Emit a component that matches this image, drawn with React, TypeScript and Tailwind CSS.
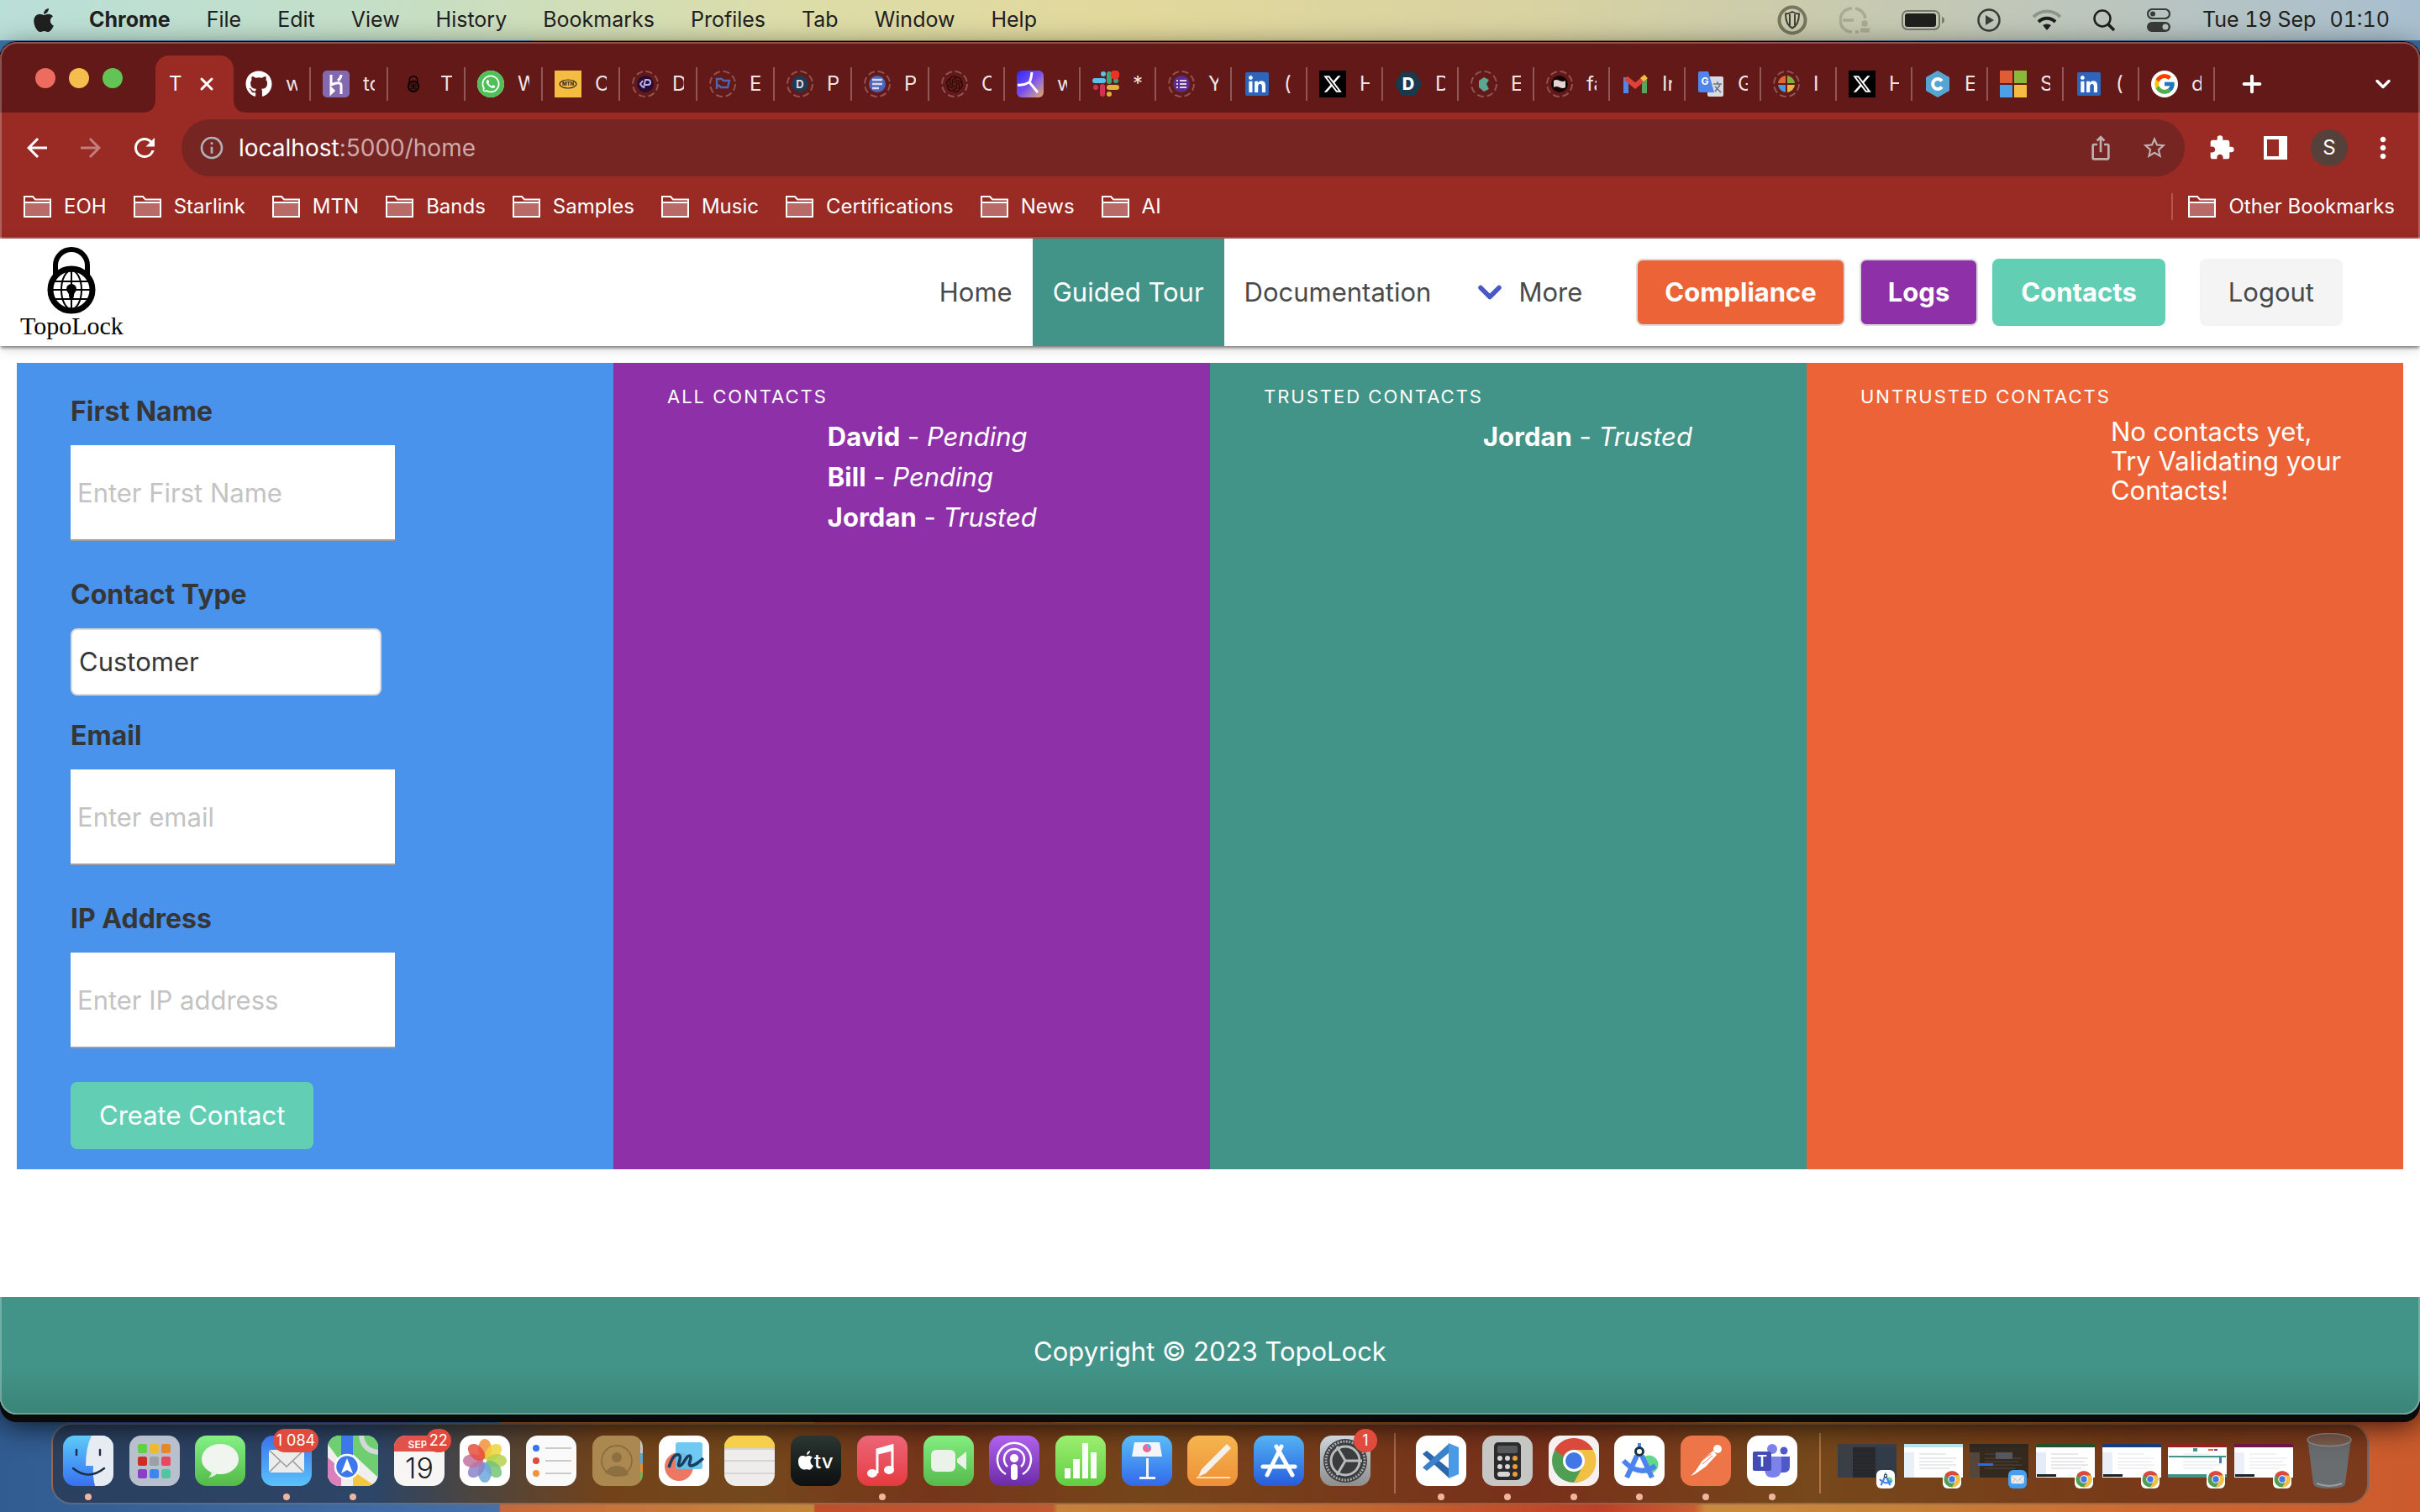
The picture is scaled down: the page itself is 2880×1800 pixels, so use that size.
import type { ReactNode } from 'react';
import { FaApple, FaGithub, FaLinkedin, FaWhatsapp } from 'react-icons/fa';
import { FaXTwitter } from 'react-icons/fa6';
import { FcGoogle } from 'react-icons/fc';
import {
  MdArrowBack,
  MdArrowForward,
  MdExtension,
  MdInfoOutline,
  MdIosShare,
  MdMoreVert,
  MdRefresh,
  MdStarBorder,
} from 'react-icons/md';
import { SiOpenai } from 'react-icons/si';
import { ChevronDown, Plus, X } from 'lucide-react';

interface Tab {
  title: string;
  icon: ReactNode;
  narrow?: boolean;
}

interface Contact {
  name: string;
  status: 'Pending' | 'Trusted';
}

const menus = ['File', 'Edit', 'View', 'History', 'Bookmarks', 'Profiles', 'Tab', 'Window', 'Help'];
const bookmarks = ['EOH', 'Starlink', 'MTN', 'Bands', 'Samples', 'Music', 'Certifications', 'News', 'AI'];

const contacts: Contact[] = [
  { name: 'David', status: 'Pending' },
  { name: 'Bill', status: 'Pending' },
  { name: 'Jordan', status: 'Trusted' },
];

// Discarded tabs get a dashed ring round a smaller favicon.
function Ring({ children }: { children?: ReactNode }) {
  return (
    <svg viewBox="0 0 32 32" className="size-8">
      <circle cx="16" cy="16" r="15" fill="none" stroke="#8f5553" strokeWidth="2" strokeDasharray="8 3.8" />
      {children}
    </svg>
  );
}

function LockMark({ className }: { className: string }) {
  return (
    <svg viewBox="0 0 58 80" className={className} fill="none" stroke="currentColor">
      <path d="M10 36V22a19 19 0 0 1 38 0v14" strokeWidth="6" />
      <circle cx="29" cy="51" r="25" strokeWidth="7" />
      <path d="M7 41h44M5 51h48M7 62h44M29 28v46" strokeWidth="2" />
      <ellipse cx="29" cy="51" rx="12" ry="23" strokeWidth="2" />
      <circle cx="29" cy="50" r="6" fill="currentColor" stroke="none" />
      <path d="M25 52h8l-2 11h-4z" fill="currentColor" stroke="none" />
    </svg>
  );
}

function XBox() {
  return (
    <span className="flex size-8 items-center justify-center bg-black">
      <FaXTwitter className="size-6 text-white" />
    </span>
  );
}

function LinkedInIcon() {
  return (
    <span className="flex size-8 items-center justify-center">
      <svg viewBox="0 0 32 32" className="absolute size-7">
        <rect x="3" y="3" width="26" height="26" fill="#fff" />
      </svg>
      <FaLinkedin className="relative size-8 text-[#2d64bc]" />
    </span>
  );
}

const tabs: Tab[] = [
  { title: 'w', icon: <FaGithub className="size-8 text-white" /> },
  {
    title: 'to',
    icon: (
      <svg viewBox="0 0 32 32" className="size-8" fill="none" stroke="#fff" strokeWidth="3">
        <rect width="32" height="32" rx="5" fill="#8369b0" stroke="none" />
        <path d="M10 5v12q12-5 12 1v10M22 5q0 4-4 7M10 21v6l3-3z" />
      </svg>
    ),
  },
  { title: 'T', icon: <LockMark className="mx-2 h-5 w-4 text-black" /> },
  {
    title: 'W',
    icon: (
      <span className="flex size-8 items-center justify-center rounded-full bg-white">
        <FaWhatsapp className="size-8 rounded-full bg-[#4fbf57] p-1 text-white" />
      </span>
    ),
  },
  {
    title: 'C',
    icon: (
      <svg viewBox="0 0 32 32" className="size-8">
        <rect width="32" height="32" fill="#f4bd41" />
        <ellipse cx="16" cy="16" rx="10" ry="5" fill="none" stroke="#222" strokeWidth="1.2" />
        <text x="16" y="18" fontSize="6" fontWeight="700" textAnchor="middle" fill="#222">MTN</text>
      </svg>
    ),
  },
  {
    title: 'D',
    icon: (
      <Ring>
        <circle cx="16" cy="16" r="10" fill="#2b0a33" />
        <path d="m13 12-3 4 3 4M14 21l2-10h3a3 3 0 0 1 0 6h-3" fill="none" stroke="#b7b3ee" strokeWidth="2" />
      </Ring>
    ),
  },
  {
    title: 'E',
    icon: (
      <Ring>
        <path d="M9 22V10h6l2 2h7l-2 8h-8l-2-2h-2" fill="none" stroke="#4d67b4" strokeWidth="2.4" />
      </Ring>
    ),
  },
  {
    title: 'P',
    icon: (
      <Ring>
        <circle cx="16" cy="16" r="10" fill="#1e3a54" />
        <text x="16" y="21" fontSize="13" fontWeight="700" textAnchor="middle" fill="#e8dede">D</text>
      </Ring>
    ),
  },
  {
    title: 'P',
    icon: (
      <Ring>
        <circle cx="16" cy="16" r="10" fill="#4a66c0" />
        <path d="M10 11h12M10 16h12M10 21h8" stroke="#e3d7e0" strokeWidth="2.4" />
      </Ring>
    ),
  },
  {
    title: 'C',
    narrow: true,
    icon: (
      <span className="relative flex size-8 items-center justify-center">
        <span className="absolute inset-0">
          <Ring />
        </span>
        <SiOpenai className="size-5 text-[#2a0806]" />
      </span>
    ),
  },
  {
    title: 'w',
    narrow: true,
    icon: (
      <span className="flex size-8 items-center justify-center rounded-md bg-linear-to-br from-[#2b20f5] via-[#7d4df0] to-[#f0a04b]">
        <svg viewBox="0 0 32 32" className="size-8" fill="none" stroke="#fff" strokeWidth="3">
          <path d="M18 2q-1 9-3 12l10 12M15 14Q8 18 1 17" />
        </svg>
      </span>
    ),
  },
  {
    title: '*',
    narrow: true,
    icon: (
      <svg viewBox="0 0 32 32" className="size-8" strokeWidth="6" strokeLinecap="round">
        <path d="M13 4v0M3 12h10" stroke="#5cc0e8" />
        <path d="M20 4v9M28 12v0" stroke="#3fa37a" />
        <path d="M12 19v9M4 20v0" stroke="#cf3553" />
        <path d="M20 20h9M20 28v0" stroke="#e3b042" />
        <circle cx="27" cy="5" r="5.500" fill="#ea3323" />
      </svg>
    ),
  },
  {
    title: 'Y',
    narrow: true,
    icon: (
      <Ring>
        <circle cx="16" cy="16" r="10" fill="#5b2d92" />
        <path d="M10 12h2M14 12h8M10 16h2M14 16h8M10 20h2M14 20h8" stroke="#e3d7e0" strokeWidth="2" />
      </Ring>
    ),
  },
  { title: '(', narrow: true, icon: <LinkedInIcon /> },
  { title: 'H', narrow: true, icon: <XBox /> },
  {
    title: 'D',
    narrow: true,
    icon: (
      <svg viewBox="0 0 32 32" className="size-8">
        <path d="M8 2h16l8 14-8 14H8L0 16z" fill="#173a4c" />
        <text x="16" y="23" fontSize="20" fontWeight="800" textAnchor="middle" fill="#fff">D</text>
      </svg>
    ),
  },
  {
    title: 'E',
    narrow: true,
    icon: (
      <Ring>
        <path d="m16 8 6 3-3 5 3 6-6 3-6-5v-8z" fill="#5aa88f" />
      </Ring>
    ),
  },
  {
    title: 'fa',
    narrow: true,
    icon: (
      <Ring>
        <circle cx="16" cy="16" r="10" fill="#170504" />
        <path d="M9 12q3-2 7 0t7 0v8q-3 2-7 0t-7 0z" fill="#e4d4d4" />
      </Ring>
    ),
  },
  {
    title: 'In',
    narrow: true,
    icon: (
      <svg viewBox="0 0 32 32" className="size-8" strokeWidth="6" fill="none">
        <path d="M5 27V8" stroke="#4f86ec" />
        <path d="M27 27V8" stroke="#57a55c" />
        <path d="m5 9 11 9 11-9" stroke="#db4437" />
        <path d="m24 11 5-4" stroke="#f4bf42" />
      </svg>
    ),
  },
  {
    title: 'G',
    narrow: true,
    icon: (
      <svg viewBox="0 0 32 32" className="size-8">
        <rect x="12" y="7" width="19" height="24" rx="2" fill="#d8dbe2" />
        <path d="M19 16h10M24 13v3M21 25l6-8M21 19l7 7" stroke="#6b7480" strokeWidth="1.6" />
        <path d="M3 1h10l7 25H3a2 2 0 0 1-2-2V3a2 2 0 0 1 2-2z" fill="#5086ec" />
        <text x="9" y="17" fontSize="12" fontWeight="700" textAnchor="middle" fill="#fff">G</text>
      </svg>
    ),
  },
  {
    title: 'I',
    narrow: true,
    icon: (
      <Ring>
        <path d="M15 15V6A10 10 0 0 0 6 15z" fill="#dd6a35" />
        <path d="M17 15V6a10 10 0 0 1 9 9z" fill="#7fae3c" />
        <path d="M15 17v9a10 10 0 0 1-9-9z" fill="#4d95dc" />
        <path d="M17 17v9a10 10 0 0 0 9-9z" fill="#e7b543" />
      </Ring>
    ),
  },
  { title: 'H', narrow: true, icon: <XBox /> },
  {
    title: 'E',
    narrow: true,
    icon: (
      <svg viewBox="0 0 32 32" className="size-8">
        <path d="m16 0 14 8v16l-14 8-14-8V8z" fill="#55a4d4" />
        <path d="M21 12.500a6 6 0 1 0 0 7" fill="none" stroke="#fff" strokeWidth="4" />
      </svg>
    ),
  },
  {
    title: 'S',
    narrow: true,
    icon: (
      <span className="grid size-8 grid-cols-2 gap-0.5">
        <span className="bg-[#e05c34]" />
        <span className="bg-[#8cb83a]" />
        <span className="bg-[#4ba0e8]" />
        <span className="bg-[#f4bd41]" />
      </span>
    ),
  },
  { title: '(', narrow: true, icon: <LinkedInIcon /> },
  {
    title: 'd',
    narrow: true,
    icon: (
      <span className="flex size-8 items-center justify-center rounded-full bg-white">
        <FcGoogle className="size-7" />
      </span>
    ),
  },
];

function MenuBar() {
  return (
    <header className="flex h-12 items-center bg-[linear-gradient(90deg,#badfd8_0%,#c3dfc9_14%,#dddda8_33%,#e2d89c_47%,#d8d2a2_64%,#cacbae_75%,#bac5bf_88%,#a8bfd0_100%)] pr-9 pl-9 text-[25px] text-[#1f2120]">
      <FaApple className="mr-[38px] size-8" />
      <nav className="flex gap-[43px]">
        <span className="font-bold">Chrome</span>
        {menus.map((m) => (
          <span key={m}>{m}</span>
        ))}
      </nav>
      <div className="ml-auto flex items-center gap-[38px]">
        <svg viewBox="0 0 36 36" className="size-9" fill="none">
          <circle cx="18" cy="18" r="15.500" stroke="#77775f" strokeWidth="4" />
          <path d="M18 8c3 2 5 2.500 8 2.500 0 9-2 14-8 17-6-3-8-8-8-17 3 0 5-.5 8-2.500zM15 11v13M21 11v13" stroke="#3f4037" strokeWidth="2" />
        </svg>
        <svg viewBox="0 0 36 36" className="size-9" fill="none" stroke="#aaab92" strokeWidth="3.500">
          <path d="M15 4a14 14 0 0 0 0 28M19 4a14 14 0 0 1 12 12M19 32h4M4 18h13" />
          <circle cx="30" cy="22" r="2" fill="#aaab92" />
          <path d="M25 30h11" strokeWidth="5" />
        </svg>
        <svg viewBox="0 0 52 26" className="h-[26px] w-[52px]">
          <rect x="1" y="2" width="44" height="22" rx="6" fill="none" stroke="#75786a" strokeWidth="2" />
          <rect x="4" y="5" width="37" height="16" rx="3" fill="#1f201e" />
          <path d="M48 9c4 1 4 7 0 8z" fill="#75786a" />
        </svg>
        <svg viewBox="0 0 28 28" className="size-7">
          <circle cx="14" cy="14" r="12.500" fill="none" stroke="#3a3c38" strokeWidth="2.500" />
          <path d="m10 8 10 6-10 6z" fill="#3a3c38" />
        </svg>
        <svg viewBox="0 0 34 26" className="h-[26px] w-[34px]" fill="none" strokeWidth="4">
          <path d="M1 9a23 23 0 0 1 32 0" stroke="#8f958c" />
          <path d="M7 15a14 14 0 0 1 20 0" stroke="#1f201e" />
          <path d="M17 25l-5-6q5-3 10 0z" fill="#1f201e" />
        </svg>
        <svg viewBox="0 0 26 26" className="size-[26px]" fill="none" stroke="#1f201e">
          <circle cx="11" cy="11" r="9.500" strokeWidth="2.500" />
          <path d="m18 18 7 7" strokeWidth="3.500" />
        </svg>
        <svg viewBox="0 0 28 28" className="size-7">
          <rect x="1" y="1" width="26" height="11" rx="5.500" fill="none" stroke="#3a3c3a" strokeWidth="2.200" />
          <circle cx="7" cy="6.500" r="3" fill="#3a3c3a" />
          <rect y="16" width="28" height="12" rx="6" fill="#3a3c3a" />
          <circle cx="22" cy="22" r="3.500" fill="#bcc6c2" />
        </svg>
        <time className="flex gap-4 whitespace-nowrap tabular-nums">
          <span>Tue 19 Sep</span>
          <span>01:10</span>
        </time>
      </div>
    </header>
  );
}

function TabStrip() {
  return (
    <div className="flex h-[84px] items-end bg-[#621917]">
      <div className="flex h-[82px] w-[185px] items-center gap-4 pl-[42px]">
        <span className="size-6 rounded-full bg-[#ed6b5f]" />
        <span className="size-6 rounded-full bg-[#f4be4f]" />
        <span className="size-6 rounded-full bg-[#61c454]" />
      </div>
      <div className="relative flex h-[68px] w-[93px] items-center justify-between rounded-t-2xl bg-[#992a24] pr-5 pl-4 text-white">
        <svg viewBox="0 0 16 16" className="absolute bottom-0 -left-4 size-4">
          <path d="M0 16h16V0q0 16-16 16" fill="#992a24" />
        </svg>
        <svg viewBox="0 0 16 16" className="absolute -right-4 bottom-0 size-4">
          <path d="M16 16H0V0q0 16 16 16" fill="#992a24" />
        </svg>
        <span className="text-2xl">T</span>
        <button type="button" aria-label="Close tab">
          <X className="size-6" strokeWidth={3} />
        </button>
      </div>
      {tabs.map((tab, i) => (
        <div
          key={i}
          className={
            tab.narrow
              ? 'flex h-[68px] w-[90px] shrink-0 items-center'
              : 'flex h-[68px] w-[92px] shrink-0 items-center'
          }
        >
          <span className="relative ml-[14px] flex w-8 shrink-0">{tab.icon}</span>
          <span className="ml-4 flex-1 overflow-hidden text-2xl whitespace-nowrap text-[#f0e4e4]">{tab.title}</span>
          <span className="ml-[14px] h-10 w-0.5 bg-[#8f5856]" />
        </div>
      ))}
      <div className="flex h-[68px] flex-1 items-center justify-between pr-[30px] pl-7 text-white">
        <button type="button" aria-label="New tab">
          <Plus className="size-8" strokeWidth={3} />
        </button>
        <button type="button" aria-label="Search tabs">
          <ChevronDown className="size-7" strokeWidth={3} />
        </button>
      </div>
    </div>
  );
}

function Toolbar() {
  return (
    <div className="flex h-[84px] items-center pl-[26px]">
      <button type="button" aria-label="Back">
        <MdArrowBack className="size-9 text-white" />
      </button>
      <button type="button" aria-label="Forward" className="ml-7">
        <MdArrowForward className="size-9 text-[#c27f7c]" />
      </button>
      <button type="button" aria-label="Reload" className="ml-7">
        <MdRefresh className="size-9 text-white" />
      </button>
      <div className="ml-[26px] flex h-[68px] flex-1 items-center rounded-full bg-[#762523] pr-5 pl-5">
        <MdInfoOutline className="size-8 text-[#aeb2b8]" />
        <p className="ml-4 text-[28px] text-[#cfa9a8]">
          <span className="text-white">localhost</span>:5000/home
        </p>
        <MdIosShare className="ml-auto size-8 text-[#bfb0b0]" />
        <MdStarBorder className="ml-8 size-8 text-[#bfb0b0]" />
      </div>
      <MdExtension className="ml-7 size-8 text-white" />
      <svg viewBox="0 0 28 28" className="ml-[34px] size-7">
        <path d="M0 0h28v28H0zM4 4v20h14V4z" fill="#fff" fillRule="evenodd" />
      </svg>
      <span className="ml-7 flex size-11 items-center justify-center rounded-full bg-[#56403a] text-2xl text-white">S</span>
      <button type="button" aria-label="Menu" className="mr-6 ml-[22px]">
        <MdMoreVert className="size-10 text-white" />
      </button>
    </div>
  );
}

function Folder() {
  return (
    <svg viewBox="0 0 34 28" className="h-7 w-[34px]" stroke="#fff" strokeWidth="2">
      <path d="M1 26V2h10l3 3.500h18V26z" fill="#992a24" />
      <path d="M1 9h31v17H1z" fill="#b96a66" />
    </svg>
  );
}

function BookmarksBar() {
  return (
    <div className="flex h-[66px] items-start gap-8 border-b-2 border-[#b4554f] pt-3 pr-[30px] pl-7 text-2xl text-white">
      {bookmarks.map((b) => (
        <a key={b} href="#" className="flex items-center gap-[14px]">
          <Folder />
          {b}
        </a>
      ))}
      <a href="#" className="ml-auto flex items-center gap-[14px] border-l-2 border-[#b4554f] pl-[18px]">
        <Folder />
        Other Bookmarks
      </a>
    </div>
  );
}

function SiteNav() {
  return (
    <nav className="relative flex h-32 items-center bg-white pr-[92px] pl-6 text-[31px] text-[#4a4a4a] shadow-[0_2px_4px_rgba(0,0,0,0.5),0_4px_16px_rgba(0,0,0,0.12)]">
      <a href="#" className="flex flex-col items-center text-black">
        <LockMark className="h-20 w-[58px]" />
        <span className="font-['Liberation_Serif',serif] text-[30px] leading-7">TopoLock</span>
      </a>
      <div className="ml-auto flex items-center self-stretch">
        <a href="#" className="px-6">Home</a>
        <a href="#" className="flex items-center self-stretch bg-[#429488] px-6 text-white">Guided Tour</a>
        <a href="#" className="px-6">Documentation</a>
        <button type="button" className="flex items-center gap-3 px-6">
          <ChevronDown className="size-11 text-[#4859c6]" strokeWidth={3} />
          More
        </button>
      </div>
      <div className="ml-10 flex items-center gap-[17px]">
        <button type="button" className="h-20 rounded-lg border-2 border-[#dbdbdb] bg-[#ec6337] px-8 font-bold text-white">
          Compliance
        </button>
        <button type="button" className="h-20 rounded-lg border-2 border-[#dbdbdb] bg-[#8e30a7] px-8 font-bold text-white">
          Logs
        </button>
        <button type="button" className="h-20 rounded-lg bg-[#62cfb5] px-[34px] font-bold text-white">Contacts</button>
        <button type="button" className="ml-6 h-20 rounded-lg bg-[#f4f4f4] px-[34px]">Logout</button>
      </div>
    </nav>
  );
}

interface FieldProps {
  id: string;
  label: string;
  placeholder: string;
}

function Field({ id, label, placeholder }: FieldProps) {
  return (
    <div className="mb-10">
      <label htmlFor={id} className="mb-4 block text-[32px] leading-[48px] font-bold text-[#363636]">
        {label}
      </label>
      <input
        id={id}
        placeholder={placeholder}
        className="block h-[114px] w-[386px] border-b-2 border-[#9e9e9e] bg-white px-2 placeholder:text-[#c3c3c3]"
      />
    </div>
  );
}

function ContactForm() {
  return (
    <form className="bg-[#4993ed] px-16 pt-[34px] pb-6 text-[31px] leading-[48px]">
      <Field id="first-name" label="First Name" placeholder="Enter First Name" />
      <div className="mb-6">
        <label htmlFor="contact-type" className="mb-4 block text-[32px] leading-[48px] font-bold text-[#363636]">
          Contact Type
        </label>
        <select
          id="contact-type"
          className="block h-20 w-[370px] appearance-none rounded-lg border-2 border-[#dbdbdb] bg-white px-2 text-[#363636]"
        >
          <option>Customer</option>
          <option>Supplier</option>
        </select>
      </div>
      <Field id="email" label="Email" placeholder="Enter email" />
      <Field id="ip-address" label="IP Address" placeholder="Enter IP address" />
      <button type="button" className="h-20 rounded-lg bg-[#62cfb5] px-[34px] text-white">
        Create Contact
      </button>
    </form>
  );
}

interface ContactColumnProps {
  title: string;
  className: string;
  children: ReactNode;
}

// The list starts where the heading ends, one row below it.
function ContactColumn({ title, className, children }: ContactColumnProps) {
  return (
    <section className={className}>
      <h2 className="col-start-1 mb-3 text-[22px] leading-6 tracking-[2px] uppercase">{title}</h2>
      <div className="col-start-2 row-start-2 text-[31px] leading-[48px]">{children}</div>
    </section>
  );
}

function ContactList({ items }: { items: Contact[] }) {
  return (
    <ul>
      {items.map((c) => (
        <li key={c.name}>
          <strong>{c.name}</strong> - <em>{c.status}</em>
        </li>
      ))}
    </ul>
  );
}

function Footer() {
  return (
    <footer className="mt-auto h-[140px] bg-linear-to-b from-[#429488] from-60% to-[#3b8377] pt-[41px] text-center text-[31px] leading-[48px] text-white">
      Copyright © 2023 TopoLock
    </footer>
  );
}

interface DockIconProps {
  bg: string;
  children?: ReactNode;
  running?: boolean;
  badge?: string;
}

function DockIcon({ bg, children, running, badge }: DockIconProps) {
  return (
    <div className="relative flex flex-col items-center pt-[13px]">
      <svg viewBox="0 0 60 60" className={`size-[60px] rounded-[14px] ${bg}`}>
        {children}
      </svg>
      {running && <span className="mt-[9px] size-2 rounded-full bg-[#f0b59c]" />}
      {badge && (
        <span className="absolute top-[5px] -right-2 flex h-7 min-w-7 items-center justify-center rounded-full bg-[#e04b3e] px-1 text-lg whitespace-nowrap text-white">
          {badge}
        </span>
      )}
    </div>
  );
}

function ChromeGlyph() {
  return (
    <g>
      <circle cx="30" cy="30" r="26" fill="#4f9e53" />
      <path d="M30 56a26 26 0 0 0 23-39H30l11 19z" fill="#f3c046" />
      <path d="M7 17a26 26 0 0 1 46 0H30a13 13 0 0 0-12 8z" fill="#d9493c" />
      <circle cx="30" cy="30" r="13" fill="#fff" />
      <circle cx="30" cy="30" r="10" fill="#4177e6" />
    </g>
  );
}

function StudioGlyph() {
  return (
    <g>
      <path d="M36 25a11 11 0 1 1 0 19z" fill="#62d98a" />
      <path d="M27 24 15 50M33 24l12 26M11 30q19 20 38 6" fill="none" stroke="#4c83ee" strokeWidth="6" />
      <path d="M30 9v8" stroke="#4c83ee" strokeWidth="4" />
      <circle cx="30" cy="19" r="4.500" fill="#fff" stroke="#14323f" strokeWidth="3" />
    </g>
  );
}

function MailGlyph() {
  return (
    <g>
      <rect x="9" y="17" width="42" height="27" rx="3" fill="#ececec" />
      <path d="m10 18 20 19 20-19M10 43l13-13M50 43 37 30" fill="none" stroke="#999" strokeWidth="1.500" />
    </g>
  );
}

const launchpadColors = ['#62cf46', '#efb834', '#e4882c', '#cf2c26', '#9aa0a4', '#e9475f', '#8b3fc6', '#3c86ef', '#55c3a0'];
const petals = ['#f0923c', '#efd43a', '#b5d14a', '#76c375', '#6ea8dc', '#8b84c9', '#c1739f', '#e5503d'];

function DockApps() {
  return (
    <div className="flex w-[1556px] justify-between">
      <DockIcon bg="bg-linear-to-b from-[#5fcaf8] to-[#3a6ff0]" running>
        <path d="M34 0h26v60H38q-3-12-2-24h-9Q27 14 34 0z" fill="#e7ebf2" />
        <path d="M16 17v6M44 17v6M12 39q18 15 37 0" fill="none" stroke="#1d2f47" strokeWidth="2.500" strokeLinecap="round" />
      </DockIcon>
      <DockIcon bg="bg-[#b7c0cc]">
        {launchpadColors.map((c, i) => (
          <rect key={c} x={10 + (i % 3) * 14} y={10 + Math.floor(i / 3) * 15} width="11" height="11" rx="2.500" fill={c} />
        ))}
      </DockIcon>
      <DockIcon bg="bg-linear-to-b from-[#85f184] to-[#53ba47]">
        <ellipse cx="30" cy="28" rx="22" ry="18" fill="#f0f6ef" />
        <path d="M20 42q0 5-4 8 8-1 11-6z" fill="#e3f3df" />
      </DockIcon>
      <DockIcon bg="bg-linear-to-b from-[#3c72ea] to-[#5cc2fa]" running badge="1 084">
        <MailGlyph />
      </DockIcon>
      <DockIcon bg="bg-[#f0efee]" running>
        <path d="M0 0h16v32L0 10zM30 0h30v50L30 22z" fill="#6fce70" />
        <path d="M0 26 16 40v20H0z" fill="#dc80bb" />
        <path d="M30 42l26 18H30z" fill="#f2c840" />
        <path d="M16 0h14v40H16z" fill="#3c78ec" />
        <path d="M40 0q2 18 20 20" fill="none" stroke="#d5d8d8" strokeWidth="6" />
        <circle cx="23" cy="37" r="14" fill="#3c78ec" stroke="#fff" strokeWidth="2.500" />
        <path d="m23 27 7 18-7-4-7 4z" fill="#fff" />
      </DockIcon>
      <DockIcon bg="bg-[#f7f6f5]" badge="22">
        <rect width="60" height="19" fill="#e2524a" />
        <text x="28" y="15" fontSize="12" fontWeight="600" textAnchor="middle" fill="#fff">SEP</text>
        <text x="30" y="51" fontSize="34" fontWeight="300" textAnchor="middle" fill="#222">19</text>
      </DockIcon>
      <DockIcon bg="bg-white">
        {petals.map((c, i) => (
          <ellipse key={c} cx="30" cy="16" rx="8" ry="12" fill={c} fillOpacity="0.85" transform={`rotate(${i * 45} 30 30)`} />
        ))}
      </DockIcon>
      <DockIcon bg="bg-[#fbfafa]">
        <path d="M23 15h31M23 30h31M23 45h31" stroke="#bcbcc0" strokeWidth="1.500" />
        <circle cx="12" cy="15" r="4" fill="#3477ea" />
        <circle cx="12" cy="30" r="4" fill="#df4a3e" />
        <circle cx="12" cy="45" r="4" fill="#ec9634" />
      </DockIcon>
      <DockIcon bg="bg-[#ab8850]">
        <path d="M57 6h3v15h-3z" fill="#c6c6c6" />
        <path d="M57 21h3v13h-3z" fill="#57a5dd" />
        <path d="M57 34h3v10h-3z" fill="#e08f35" />
        <path d="M57 44h3v10h-3z" fill="#62bb58" />
        <circle cx="29" cy="30" r="18" fill="none" stroke="#86683a" strokeWidth="1.500" />
        <circle cx="29" cy="26" r="6" fill="#8d7042" />
        <path d="M16 43q4-7 13-7t13 7-13 5-13-5z" fill="#8d7042" />
      </DockIcon>
      <DockIcon bg="bg-white">
        <circle cx="24" cy="37" r="17" fill="#ee7763" />
        <rect x="20" y="8" width="32" height="32" rx="3" fill="#5fc3ee" fillOpacity="0.9" />
        <path d="M12 38q5-17 12-15c5 2-4 14 1 13 6-2 7-13 12-12 4 2-4 11 1 12 5 0 9-4 15-9" fill="none" stroke="#173f63" strokeWidth="3.500" />
      </DockIcon>
      <DockIcon bg="bg-[#eeedeb]">
        <rect width="60" height="15" fill="#f6cf4c" />
        <path d="M0 16h60M0 30h60M0 45h60" stroke="#cfcdc9" strokeWidth="1.500" />
      </DockIcon>
      <DockIcon bg="bg-linear-to-b from-[#2b3632] to-[#0c1010]">
        <path d="M23 18q0 4-4 5 0-4 4-5M9 31c0-8 6-8 9-6 3-2 6-1 8 1-4 2-3 8 1 10-3 6-5 5-8 4-4 2-10-1-10-9z" fill="#fff" />
        <text x="28" y="39" fontSize="24" fontWeight="500" fill="#fff">tv</text>
      </DockIcon>
      <DockIcon bg="bg-linear-to-b from-[#ec6578] to-[#e6393f]" running>
        <path d="M24 45V17l18-5v29" fill="none" stroke="#fff" strokeWidth="3" />
        <path d="M23 16l20-6v8l-20 5z" fill="#fff" />
        <ellipse cx="18" cy="45" rx="6" ry="5" fill="#fff" />
        <ellipse cx="38" cy="41" rx="6" ry="5" fill="#fff" />
      </DockIcon>
      <DockIcon bg="bg-linear-to-b from-[#84ee80] to-[#56ba4c]">
        <rect x="9" y="17" width="29" height="26" rx="6" fill="#eaf2e9" />
        <path d="m40 28 11-9v22l-11-9z" fill="#eaf2e9" />
      </DockIcon>
      <DockIcon bg="bg-linear-to-b from-[#b062ec] to-[#6c2ba8]">
        <g fill="none" stroke="#fff" strokeWidth="2.500">
          <path d="M20 46a20 20 0 1 1 20 0" />
          <path d="M22 37a12 12 0 1 1 16 0" />
        </g>
        <circle cx="30" cy="27" r="5" fill="#fff" />
        <rect x="26" y="34" width="8" height="19" rx="4" fill="#fff" />
      </DockIcon>
      <DockIcon bg="bg-linear-to-b from-[#9bf06f] to-[#61cd43]">
        <path d="M11 39h7v12h-7zM21 28h8v23h-8zM32 9h7v42h-7zM42 20h7v31h-7z" fill="#fafdf9" />
      </DockIcon>
      <DockIcon bg="bg-linear-to-b from-[#5bbcf7] to-[#3568ea]">
        <path d="M15 8h30l3 17H12zM29 27h3v22h-3zM21 49h19v3H21z" fill="#f3f5f8" />
        <circle cx="30" cy="15" r="5" fill="#e56a9a" />
        <path d="M30 10v5h5a5 5 0 0 0-5-5" fill="#4fb2ea" />
      </DockIcon>
      <DockIcon bg="bg-linear-to-b from-[#f5b64e] to-[#ee8f37]">
        <path d="m47 10 5 5-30 30-9 4 4-9z" fill="#f4f1ec" />
        <path d="M11 50h40" stroke="#fbe2bd" strokeWidth="2" />
      </DockIcon>
      <DockIcon bg="bg-linear-to-b from-[#56b2f3] to-[#2a5bdd]">
        <path d="m33 13-17 34M27 13l19 34M11 37h38" stroke="#fff" strokeWidth="5" strokeLinecap="round" />
      </DockIcon>
      <DockIcon bg="bg-linear-to-b from-[#ccd6dc] to-[#8e8e8c]" badge="1">
        <circle cx="30" cy="30" r="26" fill="#3a3c3e" />
        <circle cx="30" cy="30" r="23" fill="none" stroke="#a7aaab" strokeWidth="3" strokeDasharray="2 1.500" />
        <circle cx="30" cy="30" r="17" fill="none" stroke="#b9bcbd" strokeWidth="3" />
        <path d="M30 30h20M30 30 20 13M30 30 20 47" stroke="#b9bcbd" strokeWidth="3" />
      </DockIcon>
    </div>
  );
}

function DockRunning() {
  return (
    <div className="flex w-[454px] justify-between">
      <DockIcon bg="bg-white" running>
        <path d="m8 22 5-4 27 22v11z" fill="#2c67ac" />
        <path d="m8 38 5 4 27-22V9z" fill="#3b82cb" />
        <path d="m39 9 12 5v32l-12 5z" fill="#4b9ae6" />
      </DockIcon>
      <DockIcon bg="bg-[#c6c6c5]" running>
        <rect x="14" y="8" width="32" height="45" rx="5" fill="#2b2b2d" />
        <rect x="18" y="12" width="24" height="9" rx="2" fill="#57585a" />
        <g fill="#d6d6d6">
          <circle cx="21" cy="27" r="3" />
          <circle cx="30" cy="27" r="3" />
          <circle cx="21" cy="37" r="3" />
          <circle cx="30" cy="37" r="3" />
          <rect x="18" y="43" width="15" height="6" rx="3" />
        </g>
        <g fill="#ee9a37">
          <circle cx="39" cy="27" r="3" />
          <circle cx="39" cy="37" r="3" />
          <circle cx="39" cy="46" r="3" />
        </g>
      </DockIcon>
      <DockIcon bg="bg-[#f6f1f0]" running>
        <ChromeGlyph />
      </DockIcon>
      <DockIcon bg="bg-white" running>
        <StudioGlyph />
      </DockIcon>
      <DockIcon bg="bg-[#ed7547]" running>
        <circle cx="44" cy="16" r="5" fill="#fff" />
        <path d="m39 18 4 5-13 14-13 9-5 2 6-6 9-14z" fill="#fff" />
        <path d="m22 32 14-10M26 34l12-10" stroke="#ed7547" />
      </DockIcon>
      <DockIcon bg="bg-white" running>
        <circle cx="44" cy="18" r="4.500" fill="#5059c9" />
        <path d="M38 25h13v12q0 7-7 7h-6z" fill="#5059c9" />
        <circle cx="30" cy="16" r="6" fill="#7b83eb" />
        <path d="M21 25h20v14q0 11-10 11t-10-10z" fill="#7b83eb" />
        <rect x="7" y="19" width="22" height="23" rx="2" fill="#444bb5" />
        <text x="18" y="37" fontSize="18" fontWeight="600" textAnchor="middle" fill="#fff">T</text>
      </DockIcon>
    </div>
  );
}

interface ThumbProps {
  bar: string;
  page: string;
  side: string;
  line: string;
  app: 'chrome' | 'studio' | 'mail';
  children?: ReactNode;
}

// Minimised windows, each with its app's icon over the corner.
function Thumb({ bar, page, side, line, app, children }: ThumbProps) {
  return (
    <div className="relative">
      <svg viewBox="0 0 70 40" className="h-10 w-[70px]">
        <rect width="70" height="40" fill={page} />
        <rect width="70" height="4" fill={bar} />
        <rect y="10" width="12" height="30" fill={side} />
        <path d="M18 12h32M18 17h44M18 21h40M18 25h44M18 29h36" stroke={line} />
        {children}
      </svg>
      <svg
        viewBox="0 0 60 60"
        className={
          app === 'mail'
            ? 'absolute right-0.5 -bottom-[13px] size-[22px] rounded-md bg-[#469fee]'
            : 'absolute right-0.5 -bottom-[13px] size-[22px] rounded-md bg-white'
        }
      >
        {app === 'chrome' && <ChromeGlyph />}
        {app === 'studio' && <StudioGlyph />}
        {app === 'mail' && <MailGlyph />}
      </svg>
    </div>
  );
}

function DockWindows() {
  return (
    <div className="flex w-[542px] items-start justify-between pt-[23px]">
      <Thumb bar="#3b3f43" page="#26282b" side="#3a3f45" line="#2c2f33" app="studio">
        <rect y="3" width="18" height="37" fill="#3a3f45" />
        <rect x="45" y="3" width="25" height="37" fill="#323c48" />
      </Thumb>
      <Thumb bar="#b5e2ec" page="#fff" side="#eaf0f9" line="#d3d5d8" app="chrome" />
      <Thumb bar="#2b2723" page="#33291f" side="#54463a" line="#51463c" app="mail">
        <path d="M10 23h18v3H10z" fill="#2f6be0" />
        <path d="M31 10h20v8H31z" fill="#55575e" />
      </Thumb>
      <Thumb bar="#22502a" page="#fff" side="#e5ecf7" line="#cfd0d3" app="chrome">
        <path d="M1 36h23v3H1z" fill="#222" />
      </Thumb>
      <Thumb bar="#173d78" page="#fff" side="#e9eef8" line="#e3e4e8" app="chrome">
        <path d="M1 36h23v3H1z" fill="#222" />
      </Thumb>
      <Thumb bar="#8e2420" page="#fff" side="#fff" line="#dfe5e8" app="chrome">
        <path d="M0 36h70v4H0zM1 14h68v2H1zM30 5h5v4h-5z" fill="#429488" />
        <path d="M48 6h6v2h-6z" fill="#ec6337" />
        <path d="M55 6h4v2h-4z" fill="#8e30a7" />
        <path d="M61 16h3v7h-3z" fill="#4580c0" />
      </Thumb>
      <Thumb bar="#6e1546" page="#fff" side="#eceffa" line="#e3e4e8" app="chrome">
        <path d="M1 36h23v3H1z" fill="#222" />
      </Thumb>
    </div>
  );
}

function Dock() {
  return (
    <div className="mx-[61px] mt-[10px] mb-[9px] flex h-[97px] rounded-[24px] border-2 border-[#ffffff38] bg-[linear-gradient(90deg,#2b4060_0%,#2d4566_14%,#4c4540_18%,#734219_24%,#75481c_30%,#76351a_38%,#75451a_47%,#78301a_64%,#76481b_76%,#783a18_90%,#7c3a1c_100%)] px-3">
      <DockApps />
      <span className="mt-[10px] mr-6 ml-7 h-[72px] w-0.5 bg-[#a86a4e]" />
      <DockRunning />
      <span className="mt-[10px] mr-5 ml-[26px] h-[72px] w-0.5 bg-[#b0733f]" />
      <DockWindows />
      <svg viewBox="0 0 54 68" className="mt-[10px] ml-4 h-[68px] w-[54px]">
        <path d="m1 6 7 54q1 6 19 6t19-6l7-54z" fill="#6a6d70" />
        <ellipse cx="27" cy="8" rx="26" ry="7.500" fill="#7d5c4d" stroke="#8e8f90" strokeWidth="1.500" />
        <path d="M12 60q15 6 30 0" fill="none" stroke="#9a9da0" strokeWidth="2" />
      </svg>
    </div>
  );
}

export default function App() {
  return (
    <div className="flex min-h-screen flex-col bg-[linear-gradient(90deg,#3f79b0_22%,#8a7a3c_22%,#8a7a3c_70%,#3b6da5_80%),linear-gradient(90deg,#315c92_0%,#456fa9_20.6%,#c8683a_20.7%,#c4863a_33.6%,#bf4e2a_33.7%,#c05a30_43.5%,#c5823d_43.7%,#c4682f_56%,#bd4026_66%,#c85d30_70%,#c98a40_70.5%,#c58238_78%,#cd6a32_88%,#cc5a2c_100%)] bg-[length:100%_90px,100%_100%] bg-no-repeat font-['Inter',sans-serif]">
      <MenuBar />
      <div className="relative mt-0.5 flex flex-1 flex-col overflow-hidden rounded-[20px] bg-white shadow-[0_0_0_1px_#000,0_9px_0_#0a0a0a,0_12px_36px_rgba(0,0,0,0.8)]">
        <div className="bg-[#992a24]">
          <TabStrip />
          <Toolbar />
          <BookmarksBar />
        </div>
        <SiteNav />
        <main className="mx-5 mt-5 mb-10 grid grid-cols-4 text-white">
          <ContactForm />
          <ContactColumn
            title="All Contacts"
            className="grid grid-cols-[auto_1fr] grid-rows-[auto_1fr] bg-[#8e30a7] px-16 pt-7"
          >
            <ContactList items={contacts} />
          </ContactColumn>
          <ContactColumn
            title="Trusted Contacts"
            className="grid grid-cols-[auto_1fr] grid-rows-[auto_1fr] bg-[#429488] px-16 pt-7"
          >
            <ContactList items={contacts.filter((c) => c.status === 'Trusted')} />
          </ContactColumn>
          <ContactColumn
            title="Untrusted Contacts"
            className="grid grid-cols-[auto_1fr] grid-rows-[auto_1fr] bg-[#ec6337] px-16 pt-7"
          >
            <p className="leading-[35px]">
              No contacts yet,
              <br />
              Try Validating your Contacts!
            </p>
          </ContactColumn>
        </main>
        <Footer />
        <div className="pointer-events-none absolute inset-0 rounded-[20px] border-2 border-white/25" />
      </div>
      <Dock />
    </div>
  );
}
